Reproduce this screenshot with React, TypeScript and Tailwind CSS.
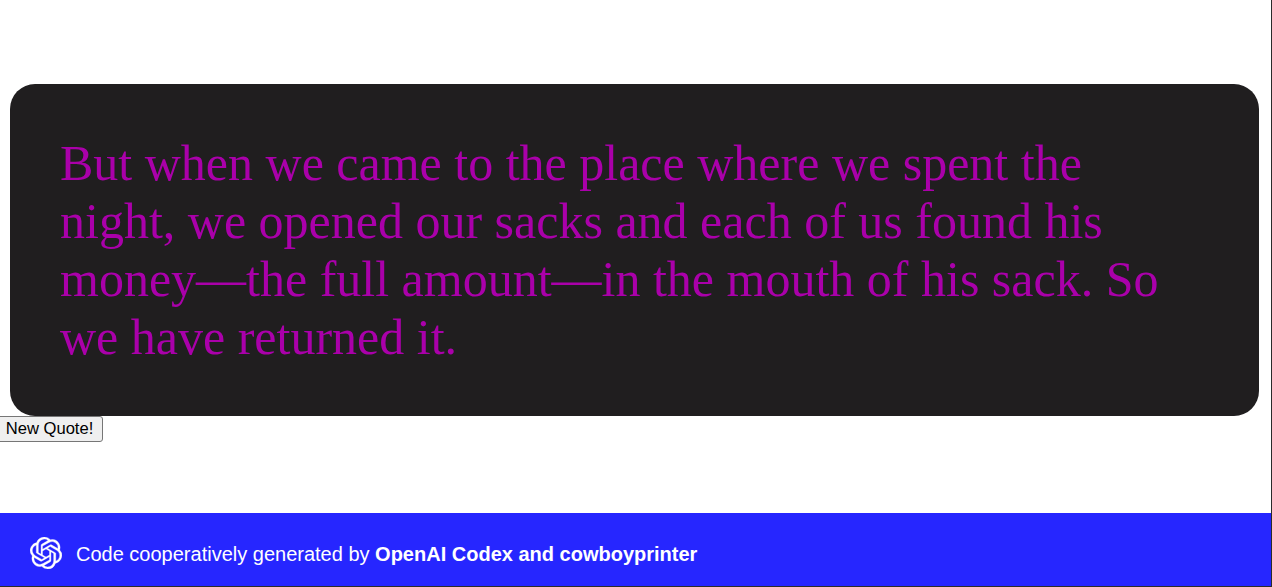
import { SiOpenai } from "react-icons/si";

function QuoteCard() {
    return (
        <div className="ml-[10px] mr-[12px] mt-[84px] rounded-[25px] bg-[#201e1f] py-[50px] pl-[50px] pr-[90px] text-[50px] leading-[58px] text-[#aa00aa] font-['Liberation_Serif',serif]">
            But when we came to the place where we spent the night, we opened our sacks and each of us found his money—the full amount—in the mouth of his sack. So we have returned it.
        </div>
    )
}

function Footer() {
    return (
        <footer className="mt-auto flex h-[73px] items-center bg-[#2626ff] pl-[30px] pt-[6px] text-[20px] text-white">
            <SiOpenai className="h-[32px] w-[32px] stroke-white stroke-[0.25px]" aria-hidden="true" />
            <p className="ml-[14px] pt-[2px]">
                Code cooperatively generated by <b className="font-bold">OpenAI Codex and cowboyprinter</b>
            </p>
        </footer>
    )
}

export default function App() {
    return (
        <div className="flex h-[587px] w-[1272px] flex-col overflow-hidden border-r border-b border-[#2b2b2b] bg-white font-['Liberation_Sans',Arial,sans-serif]">
            <QuoteCard />
            <div>
                <button className="-ml-[3px] h-[26px] w-[106px] rounded-[3px] border border-[#767676] bg-[#efefef] pr-px text-center text-[16.6px] leading-[18px] text-black">
                    New Quote!
                </button>
            </div>
            <Footer />
        </div>
    )
}
